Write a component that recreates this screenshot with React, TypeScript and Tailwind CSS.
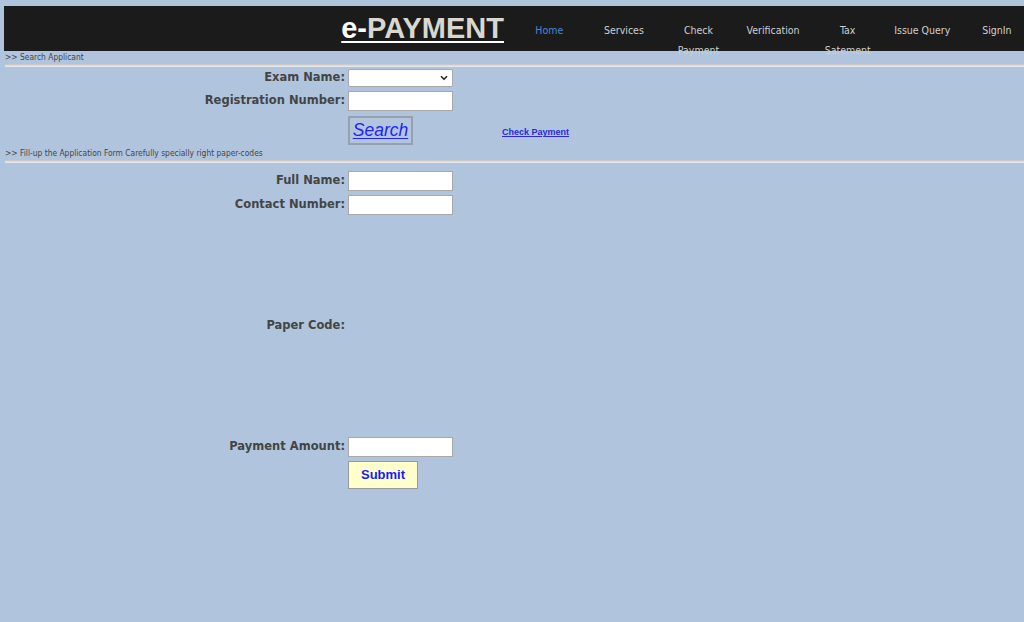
import React from "react";

const tahoma = { fontFamily: '"DejaVu Sans Condensed", "DejaVu Sans", sans-serif' };
const arial = { fontFamily: '"Liberation Sans", Arial, sans-serif' };

function NavItem({ label, active }: { label: string; active?: boolean }) {
  return (
    <div
      className={`w-[74.6px] shrink-0 pt-[14px] text-center text-[10.5px] leading-[20px] ${active ? "text-[#4a86d8]" : "text-[#cfcfcf]"}`}
    >
      {label.split("\n").map((l, i) => (
        <div key={i}>{l}</div>
      ))}
    </div>
  );
}

function Label({ children }: { children: React.ReactNode }) {
  return (
    <div
      className="w-[348px] shrink-0 pr-[3px] text-right text-[11.5px] font-bold text-[#444]"
      style={{ fontFamily: '"DejaVu Sans", sans-serif' }}
    >
      {children}
    </div>
  );
}

function TextInput() {
  return <div className="h-[20px] w-[105px] border border-[#a9a9a9] bg-white" />;
}

function Divider() {
  return <div className="ml-[5px] h-[3px] border-t border-b border-t-[#c9c9c9] border-b-[#e6e6e6] bg-[#d8dde4]" />;
}

export default function App() {
  return (
    <div className="min-h-[622px] w-[1024px] overflow-hidden bg-[#b0c4de]" style={tahoma}>
      {/* header */}
      <div className="pt-[6px] pl-[4px]">
        <div className="flex h-[45px] bg-[#1b1b1b]">
          <div className="flex flex-1 items-start justify-end pr-[8px] pt-[6px]">
            <span
              className="text-[29px] font-bold leading-[32px] underline decoration-white decoration-2 underline-offset-[3px]"
              style={arial}
            >
              <span className="text-white">e-</span>
              <span className="text-[#d9d8cf]">PAYMENT</span>
            </span>
          </div>
          <div className="flex w-[512px] shrink-0 items-start">
            <NavItem label="Home" active />
            <NavItem label="Services" />
            <NavItem label={"Check\nPayment"} />
            <NavItem label="Verification" />
            <NavItem label={"Tax\nSatement"} />
            <NavItem label="Issue Query" />
            <NavItem label="SignIn" />
          </div>
        </div>
      </div>

      {/* search section */}
      <div className="pl-[5px] text-[8.4px] leading-[12px] text-[#444]">&gt;&gt; Search Applicant</div>
      <div className="pt-[1px]">
        <Divider />
      </div>

      <div className="flex flex-col pt-[1px]">
        <div className="flex h-[19px] items-center">
          <Label>Exam Name:</Label>
          <div className="relative h-[18px] w-[105px] rounded-[2px] border border-[#a9a9a9] bg-white">
            <svg className="absolute right-[4px] top-[5px]" width="8" height="6" viewBox="0 0 8 6">
              <path d="M1 1.2 L4 4.2 L7 1.2" stroke="#222" strokeWidth="1.6" fill="none" />
            </svg>
          </div>
        </div>
        <div className="mt-[4px] flex h-[20px] items-center">
          <Label>Registration Number:</Label>
          <TextInput />
        </div>
        <div className="mt-[5px] flex h-[29px] items-center">
          <div className="w-[348px] shrink-0" />
          <div
            className="flex h-[29px] w-[65px] items-center justify-center border-2 border-[#95a1ae] bg-[#b3c5dd] text-[17.5px] italic text-[#2222ff] underline underline-offset-[2px]"
            style={arial}
          >
            Search
          </div>
          <div className="ml-[89px] mt-[5px] text-[9px] font-bold text-[#2b2bd6] underline" style={arial}>
            Check Payment
          </div>
        </div>
      </div>

      <div className="pl-[5px] pt-[2px] text-[8.4px] leading-[12px] text-[#444]">
        &gt;&gt; Fill-up the Application Form Carefully specially right paper-codes
      </div>
      <div className="pt-[1px]">
        <Divider />
      </div>

      <div className="flex flex-col pt-[8px]">
        <div className="flex h-[20px] items-center">
          <Label>Full Name:</Label>
          <TextInput />
        </div>
        <div className="mt-[4px] flex h-[20px] items-center">
          <Label>Contact Number:</Label>
          <TextInput />
        </div>
        <div className="flex h-[222px] items-center">
          <Label>Paper Code:</Label>
        </div>
        <div className="flex h-[20px] items-center">
          <Label>Payment Amount:</Label>
          <TextInput />
        </div>
        <div className="mt-[4px] flex h-[28px] items-center">
          <div className="w-[348px] shrink-0" />
          <div
            className="flex h-[28px] w-[70px] items-center justify-center border border-[#9a9a9a] bg-[#ffffcc] text-[13px] font-bold text-[#1a1aff]"
            style={arial}
          >
            Submit
          </div>
        </div>
      </div>
    </div>
  );
}
